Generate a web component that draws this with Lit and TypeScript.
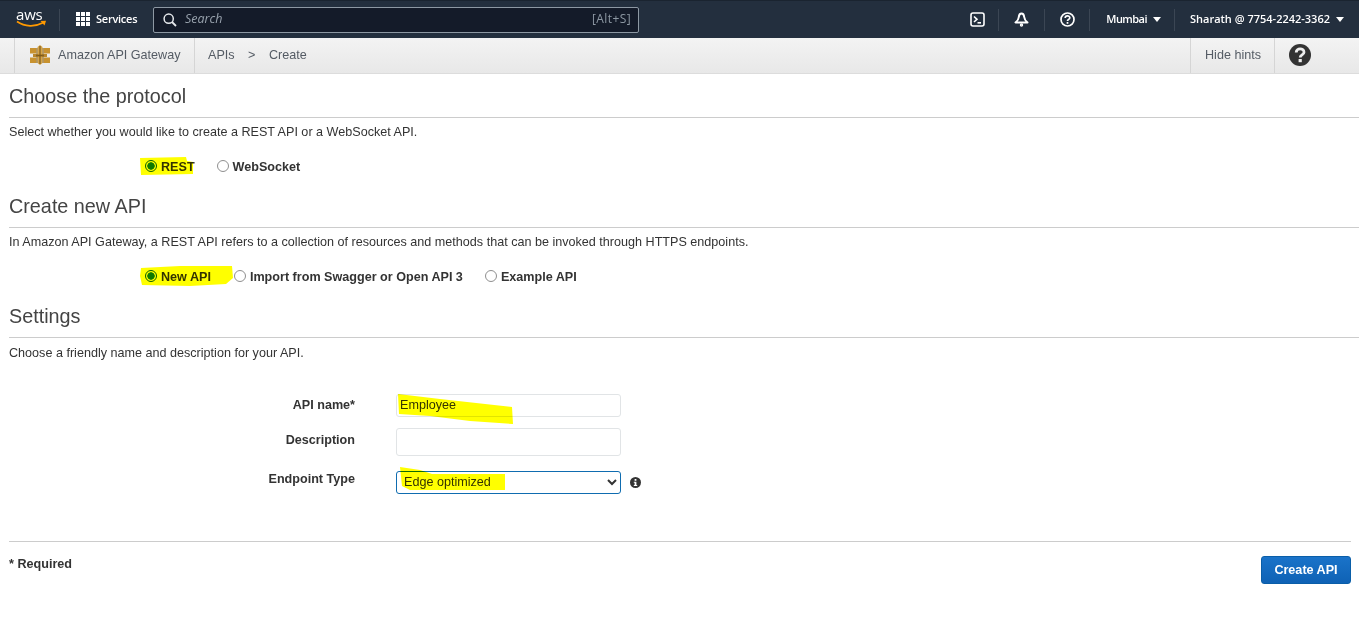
import { LitElement, html, css, svg } from 'lit';
import { customElement } from 'lit/decorators.js';

const SECTIONS = [
  {
    title: 'Choose the protocol',
    hint: 'Select whether you would like to create a REST API or a WebSocket API.',
    group: 'protocol',
    options: [
      { label: 'REST', checked: true, gap: 22 },
      { label: 'WebSocket', checked: false, gap: 0 },
    ],
  },
  {
    title: 'Create new API',
    hint: 'In Amazon API Gateway, a REST API refers to a collection of resources and methods that can be invoked through HTTPS endpoints.',
    group: 'source',
    options: [
      { label: 'New API', checked: true, gap: 23 },
      { label: 'Import from Swagger or Open API 3', checked: false, gap: 22 },
      { label: 'Example API', checked: false, gap: 0 },
    ],
  },
];

// the yellow marker strokes someone drew over the screenshot
const MARKS = [
  'M140 158 L186 157 L187 161 L193 162 L193 174 L141 175 Z',
  'M141 268 L180 266 L232 266 L233 278 L226 284 L190 286 L142 285 L140 276 Z',
  'M398 394 L440 399 L512 407 L513 424 L470 421 L430 416 L399 414 Z',
  'M400 467 L420 470 L432 474 L505 474 L505 490 L410 490 L402 486 Z',
];

@customElement('app-root')
export class AppRoot extends LitElement {
  static styles = css`
    :host {
      display: block;
      position: relative;
      height: 621px;
      overflow: hidden;
      background: #fff;
      font-family: 'Liberation Sans', Arial, sans-serif;
      color: #333;
    }

    .top-nav {
      height: 38px;
      box-sizing: border-box;
      display: flex;
      align-items: center;
      background: #232f3e;
      border-top: 1px solid #1a2430;
      color: #fff;
      font-family: 'Open Sans', sans-serif;
      font-size: 11px;
      font-weight: 600;
    }

    .aws-logo {
      width: 43px;
      margin-left: 16px;
      height: 26px;
      position: relative;
      font-family: 'Open Sans', sans-serif;
      font-size: 15px;
      font-weight: 400;
      line-height: 15px;
      flex: none;
    }

    .aws-logo span {
      display: block;
      letter-spacing: -0.2px;
    }

    .aws-logo svg {
      position: absolute;
      left: 0;
      top: 13px;
    }

    .nav-sep {
      width: 1px;
      height: 22px;
      background: #3b4654;
      flex: none;
    }

    .services {
      display: flex;
      align-items: center;
      gap: 6px;
      margin: 0 0 2px 16px;
      width: 77px;
      flex: none;
      letter-spacing: -0.25px;
    }

    .grid-icon {
      display: grid;
      grid-template-columns: repeat(3, 4px);
      grid-auto-rows: 4px;
      gap: 1px;
    }

    .grid-icon i {
      background: #fff;
    }

    .search {
      width: 486px;
      height: 26px;
      box-sizing: border-box;
      display: flex;
      align-items: center;
      padding: 0 7px 0 9px;
      gap: 8px;
      background: #141b29;
      border: 1px solid #8d98a3;
      border-radius: 2px;
      color: #98a2ad;
      font-size: 12.5px;
      font-weight: 400;
      flex: none;
    }

    .search em {
      flex: 1;
      margin-bottom: 2px;
    }

    .search b {
      font-weight: 400;
      font-size: 12px;
      letter-spacing: 0.4px;
      color: #8d98a3;
      margin-bottom: 2px;
    }

    .nav-right {
      margin-left: auto;
      display: flex;
      align-items: center;
    }

    .nav-icon {
      width: 45px;
      display: flex;
      justify-content: center;
      align-items: center;
    }

    .nav-icon.terminal {
      width: 41px;
    }

    .nav-icon.question {
      width: 44px;
    }

    .nav-menu {
      display: flex;
      align-items: center;
      gap: 6px;
      white-space: nowrap;
      margin-bottom: 2px;
    }

    .nav-menu.region {
      padding: 0 13px 0 16px;
      letter-spacing: -0.55px;
    }

    .nav-menu.account {
      padding: 0 15px 0 15px;
    }

    .caret {
      width: 0;
      height: 0;
      border-left: 4px solid transparent;
      border-right: 4px solid transparent;
      border-top: 5px solid #fff;
      margin-top: 2px;
    }

    .sub-nav {
      height: 36px;
      box-sizing: border-box;
      display: flex;
      align-items: stretch;
      padding-left: 14px;
      background: linear-gradient(#f3f3f3, #e8e8e8);
      border-bottom: 1px solid #dcdcdc;
      font-size: 12.6px;
      color: #545b64;
    }

    .sub-cell {
      display: flex;
      align-items: center;
      border-left: 1px solid #d5d5d5;
      padding-bottom: 1px;
    }

    .brand {
      width: 180px;
      box-sizing: border-box;
      padding-left: 15px;
      gap: 8px;
    }

    .crumbs {
      padding-left: 13px;
      gap: 13.5px;
      flex: 1;
    }

    .hints {
      width: 84px;
      box-sizing: border-box;
      padding-left: 14px;
    }

    .help {
      width: 85px;
      box-sizing: border-box;
      padding-left: 14px;
    }

    .content {
      padding: 0 0 0 9px;
    }

    section {
      height: 110px;
      box-sizing: border-box;
      padding-top: 9px;
    }

    h2 {
      margin: 0;
      font-size: 19.8px;
      font-weight: 400;
      line-height: 26px;
      color: #444;
      height: 34px;
      border-bottom: 1px solid #ccc;
    }

    .hint {
      margin: 7px 0 0;
      font-size: 12.6px;
      line-height: 15px;
      color: #333;
    }

    .radios {
      display: flex;
      align-items: center;
      margin: 18px 0 0 136px;
      font-size: 12.6px;
      font-weight: 700;
    }

    .radios label {
      display: flex;
      align-items: center;
      gap: 4px;
    }

    .radios span {
      padding-top: 2px;
    }

    input[type='radio'] {
      appearance: none;
      box-sizing: border-box;
      width: 12px;
      height: 12px;
      margin: 0;
      border: 1px solid #8f8f8f;
      border-radius: 50%;
      background: #fff;
    }

    input[type='radio']:checked {
      border-color: #0b5f24;
      background: radial-gradient(circle, #0e7a2c 3.4px, #fff 4px);
    }

    .settings {
      height: auto;
    }

    .settings .hint {
      margin-top: 8px;
    }

    .form {
      display: grid;
      grid-template-columns: 387px 225px 20px;
      grid-auto-rows: 34px;
      align-items: center;
      row-gap: 5px;
      margin-top: 27px;
      font-size: 12.6px;
      font-weight: 700;
    }

    .form label {
      text-align: right;
      padding-right: 41px;
    }

    .form label.up {
      padding-bottom: 8px;
    }

    .form input,
    .form select {
      box-sizing: border-box;
      width: 225px;
      font: 400 12.6px 'Liberation Sans', Arial, sans-serif;
      color: #333;
      border: 1px solid #e1e4e6;
      border-radius: 3px;
      background: transparent;
      outline: none;
    }

    .form input {
      height: 23px;
      padding: 0 3px;
    }

    .form input.tall {
      height: 28px;
      margin-bottom: 4px;
    }

    .form select {
      height: 23px;
      padding: 0 3px;
      border-color: #0f6cb0;
      margin-bottom: 2px;
    }

    .form .info {
      margin: 0 0 2px 9px;
      display: block;
    }

    .footer {
      display: flex;
      align-items: flex-start;
      justify-content: space-between;
      margin: 41px 8px 0 0;
      padding-top: 14px;
      border-top: 1px solid #ccc;
      font-size: 12.6px;
      font-weight: 700;
    }

    .footer span {
      padding-top: 1px;
    }

    .create {
      width: 90px;
      height: 28px;
      border: 1px solid #0a5ea8;
      border-radius: 3px;
      background: linear-gradient(#1a73c9, #0f62b5);
      color: #fff;
      font: 700 12.6px 'Liberation Sans', Arial, sans-serif;
      padding: 0;
    }

    .marks {
      position: absolute;
      inset: 0;
      mix-blend-mode: multiply;
      pointer-events: none;
    }
  `;

  renderSection(s: (typeof SECTIONS)[number]) {
    return html`
      <section>
        <h2>${s.title}</h2>
        <p class="hint">${s.hint}</p>
        <div class="radios">
          ${s.options.map(
            (o) => html`
              <label style="margin-right:${o.gap}px">
                <input type="radio" name=${s.group} .checked=${o.checked} /><span>${o.label}</span>
              </label>
            `
          )}
        </div>
      </section>
    `;
  }

  render() {
    return html`
      <div class="top-nav">
        <div class="aws-logo">
          <span>aws</span>
          <svg width="31" height="9" viewBox="0 0 31 9" fill="none">
            <path d="M1 1.5 C9 7 19 7 27 2.8" stroke="#f90" stroke-width="1.8" />
            <path d="M24.5 1 L30 0.8 L28.5 5.5 Z" fill="#f90" />
          </svg>
        </div>
        <div class="nav-sep"></div>
        <div class="services">
          <div class="grid-icon">${Array.from({ length: 9 }, () => html`<i></i>`)}</div>
          Services
        </div>
        <div class="search">
          <svg width="14" height="14" viewBox="0 0 14 14" fill="none" stroke="#e6e9ec" stroke-width="1.5">
            <circle cx="5.7" cy="5.7" r="4.6" />
            <path d="M9 9 L13 13" stroke-width="1.8" />
          </svg>
          <em>Search</em>
          <b>[Alt+S]</b>
        </div>
        <div class="nav-right">
          <div class="nav-icon terminal">
            <svg width="15" height="15" viewBox="0 0 15 15" fill="none" stroke="#fff" stroke-width="1.6">
              <rect x="1" y="1" width="13" height="13" rx="2" />
              <path d="M4 4.5 L7 7.3 L4 10" />
              <path d="M7.5 10.8 H11" />
            </svg>
          </div>
          <div class="nav-sep"></div>
          <div class="nav-icon">
            <svg width="15" height="15" viewBox="0 0 15 15" fill="none" stroke="#fff" stroke-width="2">
              <path d="M7.5 1.5 C5.6 1.5 5 3 4.8 5 C4.6 7 3.4 9 1.5 10.5 H13.5 C11.6 9 10.4 7 10.2 5 C10 3 9.4 1.5 7.5 1.5 Z" stroke-linejoin="round" />
              <circle cx="7.5" cy="13" r="1" stroke-width="1.4" />
            </svg>
          </div>
          <div class="nav-sep"></div>
          <div class="nav-icon question">
            <svg width="15" height="15" viewBox="0 0 15 15" fill="none" stroke="#fff" stroke-width="1.7">
              <circle cx="7.5" cy="7.5" r="6.5" />
              <path d="M5.2 6 C5.2 3.2 9.8 3.2 9.8 5.8 C9.8 7.4 7.5 7.3 7.5 9" />
              <path d="M7.5 10 V11.8" />
            </svg>
          </div>
          <div class="nav-sep"></div>
          <div class="nav-menu region">Mumbai <span class="caret"></span></div>
          <div class="nav-sep"></div>
          <div class="nav-menu account">Sharath @ 7754-2242-3362 <span class="caret"></span></div>
        </div>
      </div>

      <div class="sub-nav">
        <div class="sub-cell brand">
          <svg width="20" height="20" viewBox="0 0 20 20">
            <path d="M0 3 H6.5 V8.5 H0 Z M13.5 3 H20 V8.5 H13.5 Z M0 12.5 H6.5 V18 H0 Z M13.5 12.5 H20 V18 H13.5 Z" fill="#c8922f" />
            <path d="M7.5 2 L10 0 L12.5 2 V18 L10 20 L7.5 18 Z" fill="#d6a548" />
            <path d="M3 9 H17 V12 H3 Z" fill="#b9872c" />
            <path d="M6 10 H14 V11 H6 Z M9.4 1 H10.6 V19 H9.4 Z" fill="#7d5a1c" />
            <path d="M6.5 3 H7.5 V18 H6.5 Z M12.5 3 H13.5 V18 H12.5 Z" fill="#8f6a24" />
          </svg>
          Amazon API Gateway
        </div>
        <div class="sub-cell crumbs"><span>APIs</span><span>&gt;</span><span>Create</span></div>
        <div class="sub-cell hints">Hide hints</div>
        <div class="sub-cell help">
          <svg width="22" height="22" viewBox="0 0 22 22">
            <circle cx="11" cy="11" r="11" fill="#333" />
            <path d="M7.2 8.4 C7.2 3.8 15 3.8 15 8.2 C15 11 11.2 10.8 11.2 13.4" fill="none" stroke="#eee" stroke-width="2.8" />
            <rect x="9.6" y="15" width="3.2" height="3.2" fill="#eee" />
          </svg>
        </div>
      </div>

      <div class="content">
        ${SECTIONS.map((s) => this.renderSection(s))}
        <section class="settings">
          <h2>Settings</h2>
          <p class="hint">Choose a friendly name and description for your API.</p>
          <div class="form">
            <label>API name*</label>
            <input value="Employee" />
            <span></span>
            <label class="up">Description</label>
            <input class="tall" />
            <span></span>
            <label class="up">Endpoint Type</label>
            <select><option>Edge optimized</option></select>
            <svg class="info" width="11" height="11" viewBox="0 0 11 11">
              <circle cx="5.5" cy="5.5" r="5.5" fill="#333" />
              <rect x="4.6" y="2" width="1.8" height="1.8" fill="#fff" />
              <path d="M3.8 4.8 H6.4 V8 H7.2 V9 H3.8 V8 H4.6 V5.8 H3.8 Z" fill="#fff" />
            </svg>
          </div>
          <div class="footer">
            <span>* Required</span>
            <button class="create">Create API</button>
          </div>
        </section>
      </div>

      <svg class="marks" width="1359" height="621" viewBox="0 0 1359 621">
        ${MARKS.map((d) => svg`<path d=${d} fill="#ffff00" />`)}
      </svg>
    `;
  }
}
